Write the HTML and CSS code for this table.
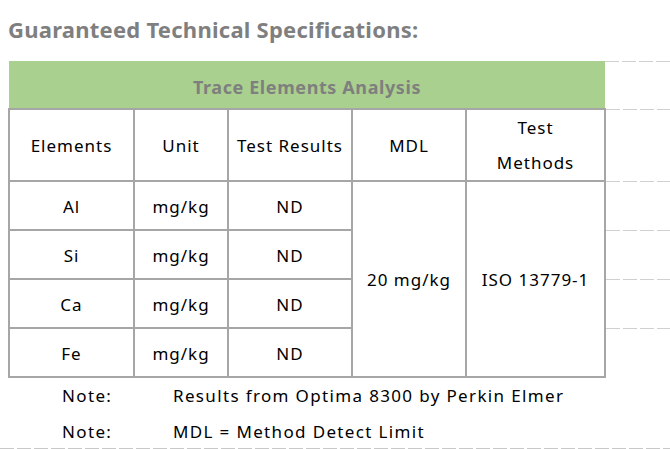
FILE: index.html
```html
<!DOCTYPE html>
<html>
<head>
<meta charset="utf-8">
<link rel="stylesheet" href="styles.css">
</head>
<body>
<div class="page">
  <h1 class="title">Guaranteed Technical Specifications:</h1>
  <table class="sheet">
    <colgroup>
      <col class="c1"><col class="c2"><col class="c3"><col class="c4"><col class="c5"><col class="c6">
    </colgroup>
    <tr class="r-green">
      <td class="green" colspan="5">Trace Elements Analysis</td>
      <td class="pad"></td>
    </tr>
    <tr class="r-head">
      <td>Elements</td>
      <td>Unit</td>
      <td>Test Results</td>
      <td>MDL</td>
      <td class="two">Test<br>Methods</td>
      <td class="pad"></td>
    </tr>
    <tr class="r-data">
      <td>Al</td><td>mg/kg</td><td>ND</td>
      <td rowspan="4">20 mg/kg</td>
      <td rowspan="4">ISO 13779-1</td>
      <td class="pad"></td>
    </tr>
    <tr class="r-data r2">
      <td>Si</td><td>mg/kg</td><td>ND</td>
      <td class="pad"></td>
    </tr>
    <tr class="r-data">
      <td>Ca</td><td>mg/kg</td><td>ND</td>
      <td class="pad"></td>
    </tr>
    <tr class="r-data">
      <td>Fe</td><td>mg/kg</td><td>ND</td>
      <td class="pad"></td>
    </tr>
  </table>
  <div class="notes">
    <div class="note-row first">
      <span class="note-label">Note:</span>
      <span class="note-text">Results from Optima 8300 by Perkin Elmer</span>
    </div>
    <div class="note-row">
      <span class="note-label">Note:</span>
      <span class="note-text">MDL = Method Detect Limit</span>
    </div>
  </div>
</div>
</body>
</html>
```

FILE: styles.css
```css
html, body {
  margin: 0;
  padding: 0;
  background: #ffffff;
}

.page {
  width: 670px;
  height: 449px;
  overflow: hidden;
  font-family: "Noto Sans", "Open Sans", sans-serif;
  color: #000000;
}

.title {
  margin: 0;
  height: 61px;
  box-sizing: border-box;
  padding: 14px 0 0 8px;
  font-size: 22px;
  font-weight: 700;
  color: #7f7f7f;
  letter-spacing: 0.25px;
  line-height: 30px;
}

.sheet {
  margin-left: 8px;
  border-collapse: collapse;
  table-layout: fixed;
  width: 662px;
}

.c1 { width: 125px; }
.c2 { width: 94px; }
.c3 { width: 124px; }
.c4 { width: 114px; }
.c5 { width: 139px; }
.c6 { width: 66px; }

.sheet td {
  border: 2px solid #a6a6a6;
  padding: 1px 0 0 0;
  text-align: center;
  vertical-align: middle;
  font-size: 17px;
  letter-spacing: 1px;
  white-space: nowrap;
}

.sheet td.green {
  border: none;
  border-bottom: 2px solid #a6a6a6;
  background: #a9d08e;
  color: #7f7f7f;
  font-weight: 700;
  font-size: 18px;
  letter-spacing: 0.6px;
  padding-top: 4px;
}

.sheet td.pad {
  border: none;
  padding: 0;
  background-image: repeating-linear-gradient(to right, #d0d0d0 0 14px, transparent 14px 17px);
  background-size: 100% 1px;
  background-repeat: no-repeat;
  background-position: 0 0;
}

.r-green { height: 48px; }
.r-head { height: 72px; }
.r-data { height: 49px; }

.sheet td.two {
  padding: 0;
  line-height: 35px;
}

.notes {
  height: 72px;
  background-image: repeating-linear-gradient(to right, #c8c8c8 0 14px, transparent 14px 17px);
  background-size: 100% 2px;
  background-repeat: no-repeat;
  background-position: 0 70px;
}

.note-row {
  display: flex;
  height: 36px;
  box-sizing: border-box;
  padding-bottom: 2px;
  align-items: center;
  font-size: 17px;
  letter-spacing: 1.35px;
}

.note-label {
  width: 111px;
  padding-left: 62px;
  flex: none;
}

.note-text {
  flex: none;
}
```
